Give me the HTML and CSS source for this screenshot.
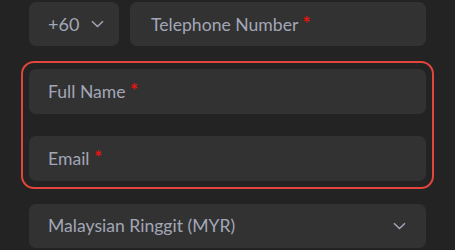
FILE: index.html
```html
<!DOCTYPE html>
<html>
<head>
<meta charset="utf-8">
<link rel="stylesheet" href="styles.css">
</head>
<body>
<div class="form">
  <div class="row">
    <div class="field code">
      <span class="label">+60</span>
      <svg class="chev" width="13" height="8" viewBox="0 0 13 8"><path d="M1 1.2 L6.5 6.5 L12 1.2" fill="none" stroke="#a3a8b8" stroke-width="1.5"/></svg>
    </div>
    <div class="field grow"><span class="label">Telephone Number <span class="req">*</span></span></div>
  </div>
  <div class="group">
    <div class="field"><span class="label">Full Name <span class="req">*</span></span></div>
    <div class="field"><span class="label">Email <span class="req">*</span></span></div>
  </div>
  <div class="field select">
    <span class="label">Malaysian Ringgit (MYR)</span>
    <svg class="chev" width="13" height="8" viewBox="0 0 13 8"><path d="M1 1.2 L6.5 6.5 L12 1.2" fill="none" stroke="#a3a8b8" stroke-width="1.5"/></svg>
  </div>
</div>
</body>
</html>
```
FILE: styles.css
```css
html, body {
  margin: 0;
  padding: 0;
  background: #232323;
}
body {
  width: 455px;
  height: 250px;
  overflow: hidden;
  font-family: Lato, "Liberation Sans", sans-serif;
}
.form {
  width: 397px;
  margin-left: 29px;
  padding-top: 2px;
  display: flex;
  flex-direction: column;
}
.row {
  display: flex;
  gap: 11px;
}
.field {
  height: 44px;
  background: #323232;
  border-radius: 7px;
  display: flex;
  align-items: center;
  padding: 0 19px;
  box-sizing: border-box;
}
.chev {
  flex-shrink: 0;
}
.code {
  width: 90px;
  flex-shrink: 0;
  gap: 12px;
  padding-right: 0;
}
.code .label {
  font-size: 18px;
}
.grow {
  flex: 1;
  padding-left: 21px;
}
.label {
  color: #a2a7b7;
  font-size: 17.6px;
  line-height: 20px;
}
.req {
  color: #e8140f;
  font-size: 19px;
  font-weight: 700;
  position: relative;
  top: -1px;
}
.group {
  margin: 15px -8px 0;
  border: 2px solid #e2453b;
  border-radius: 13px;
  padding: 6px;
  display: flex;
  flex-direction: column;
  gap: 22px;
}
.group .field {
  height: 45px;
}
.select {
  margin-top: 15px;
  justify-content: space-between;
}
.select .chev {
  margin-right: 1px;
}
```
